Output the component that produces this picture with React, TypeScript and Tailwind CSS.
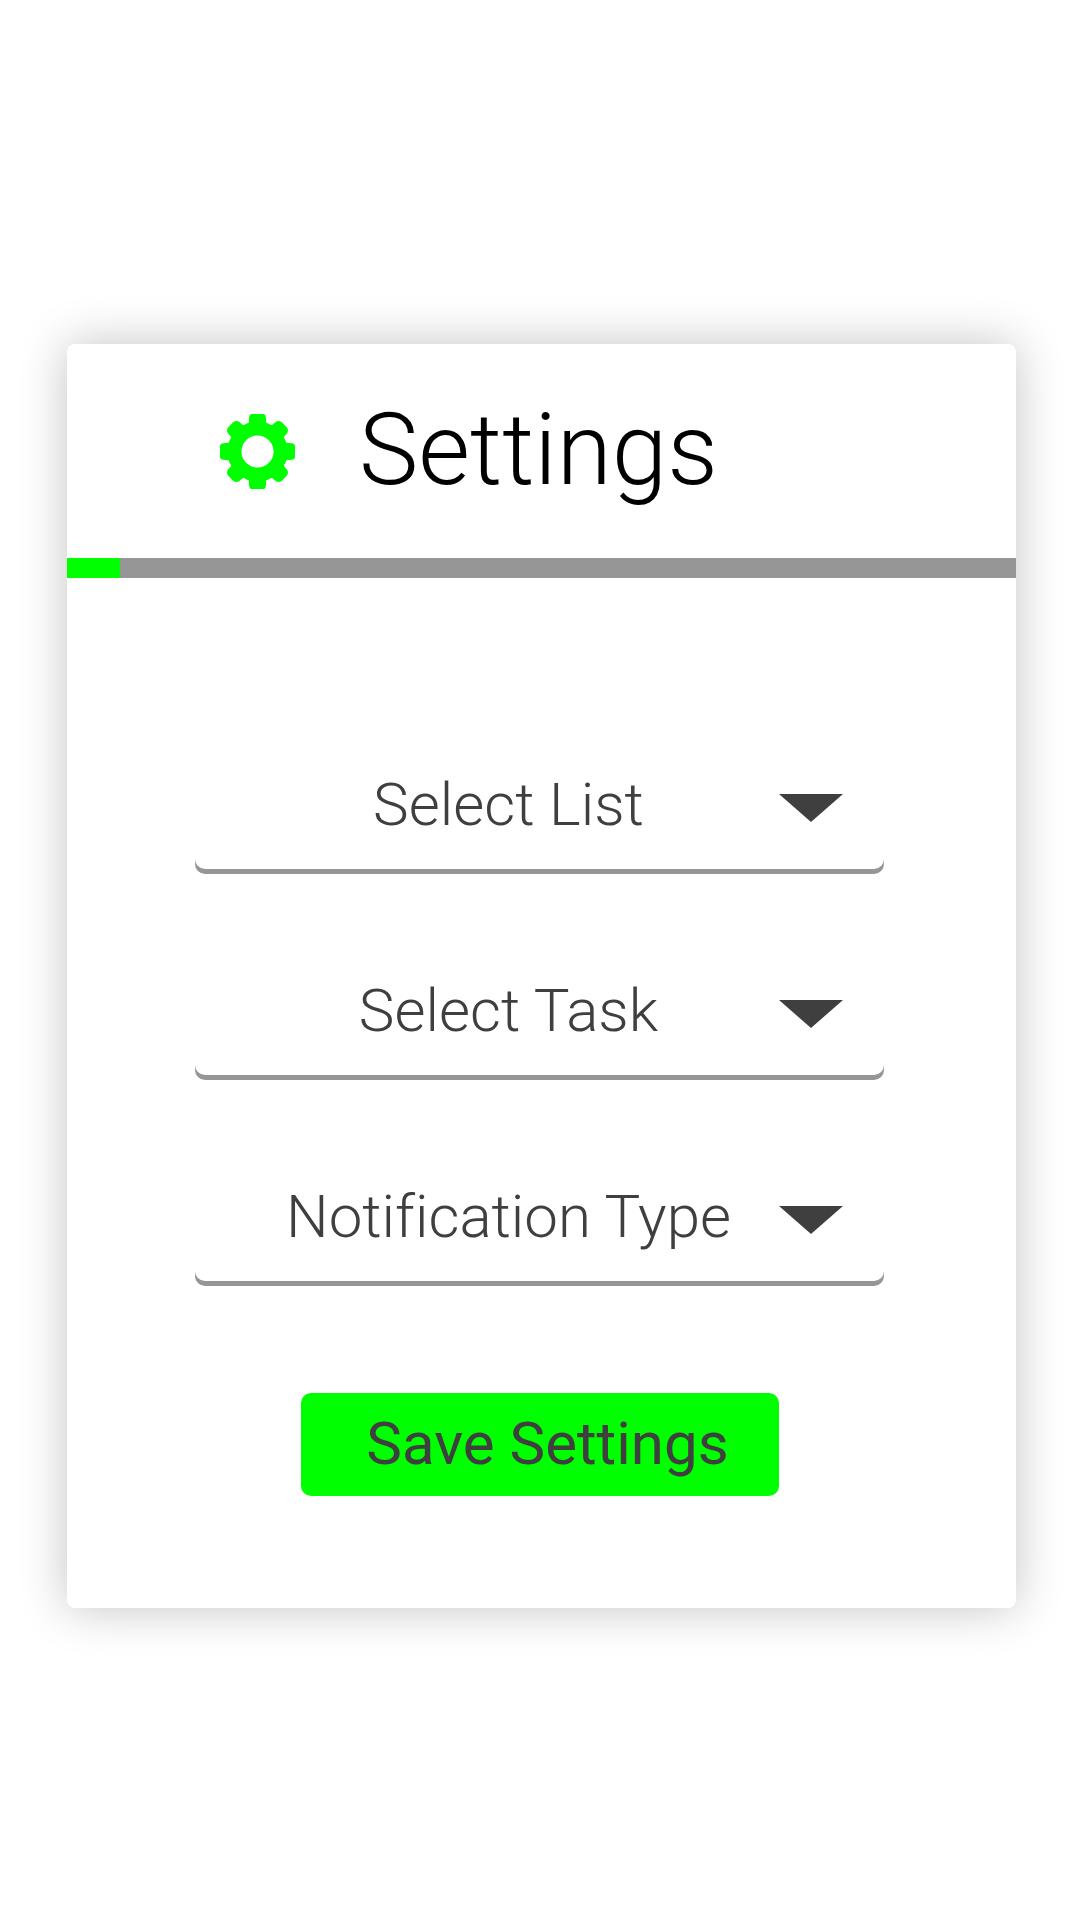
function GearIcon() {
  return (
    <svg viewBox="-112 -112 224 224" className="size-[75px] shrink-0 fill-[#00ff00]" aria-hidden="true">
      <path
        fillRule="evenodd"
        d="M-16-112H16Q24-112 25-102L26-86Q34-84 40-79L44-79L54-88Q63-94 72-88L88-72Q94-63 88-54L79-44L79-40Q84-34 86-26L102-25Q112-24 112-16
        V16Q112 24 102 25L86 26Q84 34 79 40L79 44L88 54Q94 63 88 72L72 88Q63 94 54 88L44 79L40 79Q34 84 26 86L25 102Q24 112 16 112
        H-16Q-24 112-25 102L-26 86Q-34 84-40 79L-44 79L-54 88Q-63 94-72 88L-88 72Q-94 63-88 54L-79 44L-79 40Q-84 34-86 26L-102 25Q-112 24-112 16
        V-16Q-112-24-102-25L-86-26Q-84-34-79-40L-79-44L-88-54Q-94-63-88-72L-72-88Q-63-94-54-88L-44-79L-40-79Q-34-84-26-86L-25-102Q-24-112-16-112Z
        M0-48A48 48 0 0 0 0 48A48 48 0 0 0 0-48Z"
      />
    </svg>
  );
}

function SelectField({ id, label }: { id: string; label: string }) {
  return (
    <div className="relative">
      <select
        id={id}
        aria-label={label}
        className="block h-[123px] w-full appearance-none rounded-[10px] bg-transparent pb-1.5 pr-[62px] text-center text-6xl leading-[80px] font-light text-[#3f3f3f] shadow-[0_5px_0_#969696] outline-none [font-variant-ligatures:none]"
      >
        <option>{label}</option>
      </select>
      <svg
        viewBox="0 0 64 28"
        className="pointer-events-none absolute right-[41px] top-12 h-7 w-16 fill-[#3f3f3f]"
        aria-hidden="true"
      >
        <path d="M0 0H64L32 28Z" />
      </svg>
    </div>
  );
}

export default function App() {
  return (
    <main className="min-h-screen bg-white pb-20 pl-[67px] pr-16 pt-[344px] font-['Roboto',sans-serif]">
      <section className="rounded-lg bg-white shadow-[0_0_48px_rgba(0,0,0,0.24)]">
        <header className="flex h-[214px] items-center gap-16 pl-[153px]">
          <GearIcon />
          <h1 className="pb-0.5 text-[100px] leading-[120px] font-light text-black">Settings</h1>
        </header>
        <div
          role="progressbar"
          aria-label="Setup progress"
          aria-valuenow={6}
          aria-valuemin={0}
          aria-valuemax={100}
          className="h-5 bg-[#969696]"
        >
          <div className="h-full w-[53px] bg-[#00ff00]" />
        </div>
        <form
          className="flex flex-col gap-[83px] pb-28 pl-32 pr-[132px] pt-[168px]"
          onSubmit={(event) => event.preventDefault()}
        >
          <SelectField id="list" label="Select List" />
          <SelectField id="task" label="Select Task" />
          <SelectField id="notification" label="Notification Type" />
          <button
            type="submit"
            className="mt-[29px] h-[103px] w-[478px] self-center rounded-[10px] bg-[#00ff00] pb-0.5 pl-4 text-6xl text-[#3f3f3f]"
          >
            Save Settings
          </button>
        </form>
      </section>
    </main>
  );
}
